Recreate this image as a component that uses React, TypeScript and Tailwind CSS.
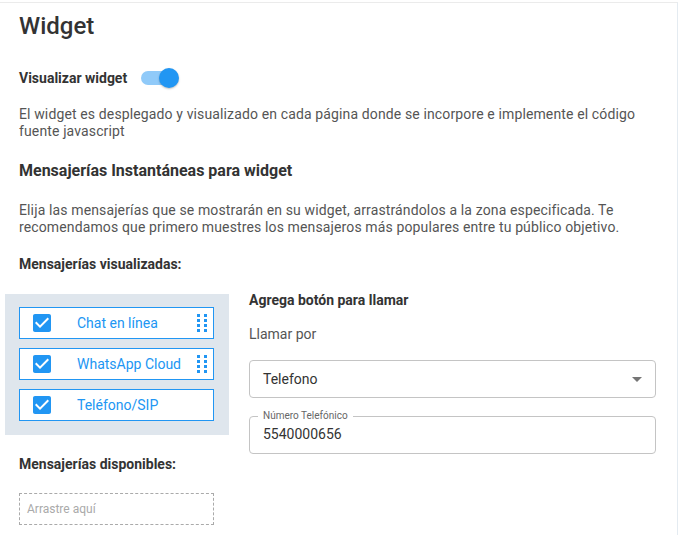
import React from "react";

const font = { fontFamily: "Roboto, 'Liberation Sans', sans-serif" };

const visible = [
  { label: "Chat en línea", drag: true },
  { label: "WhatsApp Cloud", drag: true },
  { label: "Teléfono/SIP", drag: false },
];

function CheckIcon() {
  return (
    <svg width="24" height="24" viewBox="0 0 24 24" className="shrink-0 fill-[#2196f3]">
      <path d="M19 3H5c-1.11 0-2 .9-2 2v14c0 1.1.89 2 2 2h14c1.11 0 2-.9 2-2V5c0-1.1-.89-2-2-2zm-9 14l-5-5 1.41-1.41L10 14.17l7.59-7.59L19 8l-9 9z" />
    </svg>
  );
}

function DragHandle() {
  return (
    <div className="grid grid-cols-2 gap-x-[4px] gap-y-[2px]">
      {Array.from({ length: 8 }).map((_, i) => (
        <span key={i} className="block h-[3px] w-[3px] bg-[#2196f3]" />
      ))}
    </div>
  );
}

function Toggle() {
  return (
    <div className="relative h-[20px] w-[38px]">
      <div className="absolute left-0 top-[3px] h-[14px] w-[34px] rounded-full bg-[#90caf9]" />
      <div className="absolute right-0 top-0 h-[20px] w-[20px] rounded-full bg-[#2196f3] shadow-[0_1px_2px_rgba(0,0,0,0.25)]" />
    </div>
  );
}

export default function App() {
  return (
    <div style={font} className="mt-[2px] w-[678px] min-h-[533px] border-t border-r border-t-[#ebebeb] border-r-[#e4ebf1] bg-white pl-[19px] pr-[21px] pt-[7px] text-[#333]">
      <h1 className="text-[24px] leading-[32px] font-medium">Widget</h1>

      <div className="mt-[26px] flex h-[20px] items-center gap-[14px]">
        <span className="text-[14px] font-bold leading-[17px]">Visualizar widget</span>
        <Toggle />
      </div>

      <p className="mt-[18px] text-[14px] leading-[17px] tracking-[0.13px] text-[#555]">
        El widget es desplegado y visualizado en cada página donde se incorpore e implemente el código fuente javascript
      </p>

      <h2 className="mt-[21px] text-[16px] font-bold leading-[20px]">
        Mensajerías Instantáneas para widget
      </h2>

      <p className="mt-[21px] text-[14px] leading-[17px] tracking-[0.13px] text-[#555]">
        Elija las mensajerías que se mostrarán en su widget, arrastrándolos a la zona especificada. Te recomendamos que primero muestres los mensajeros más populares entre tu público objetivo.
      </p>

      <h3 className="mt-[20px] text-[14px] font-bold leading-[17px]">Mensajerías visualizadas:</h3>

      <div className="mt-[21px] flex items-start gap-[20px]">
        <div className="w-[210px] shrink-0">
          <div className="-ml-[14px] flex flex-col gap-[9px] bg-[#dfe6ed] pb-[14px] pl-[14px] pr-[15px] pt-[13px]">
            {visible.map((m) => (
              <div
                key={m.label}
                className="flex h-[32px] items-center border border-[#2196f3] bg-white pl-[10px] pr-[6px]"
              >
                <CheckIcon />
                <span className="ml-[23px] flex-1 text-[14px] text-[#2196f3]">{m.label}</span>
                {m.drag && <DragHandle />}
              </div>
            ))}
          </div>

          <h3 className="mt-[21px] text-[14px] font-bold leading-[17px]">Mensajerías disponibles:</h3>

          <div className="mt-[20px] flex h-[32px] w-[195px] items-center border border-dashed border-[#aaa] pl-[7px] text-[12px] text-[#aaa]">
            Arrastre aquí
          </div>
        </div>

        <div className="flex-1 -mt-[2px]">
          <h3 className="text-[14px] font-bold leading-[17px]">Agrega botón para llamar</h3>
          <p className="mt-[17px] text-[14px] leading-[17px] text-[#555]">Llamar por</p>

          <div className="mt-[17px] flex h-[38px] items-center justify-between rounded-[4px] border border-[#c4c4c4] pl-[13px] pr-[6px]">
            <span className="text-[14px] text-[#333]">Telefono</span>
            <svg width="24" height="24" viewBox="0 0 24 24" className="fill-[#757575]">
              <path d="M7 10l5 5 5-5z" />
            </svg>
          </div>

          <div className="relative mt-[18px] flex h-[38px] items-center rounded-[4px] border border-[#c4c4c4] pb-[2px] pl-[13px]">
            <span className="absolute -top-[7px] left-[8px] bg-white px-[5px] text-[10px] leading-[12px] text-[#666]">
              Número Telefónico
            </span>
            <span className="text-[14px] text-[#333]">5540000656</span>
          </div>
        </div>
      </div>
    </div>
  );
}
